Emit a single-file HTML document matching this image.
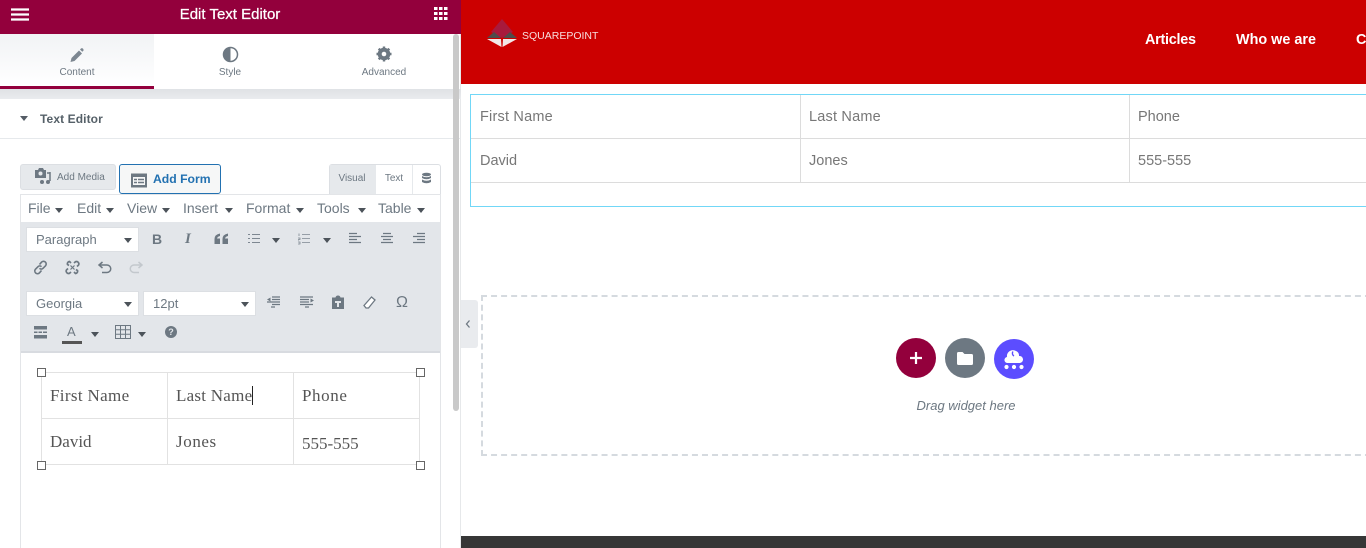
<!DOCTYPE html>
<html><head><meta charset="utf-8">
<style>
*{box-sizing:border-box}
html,body{margin:0;padding:0;width:1366px;height:548px;overflow:hidden;background:#fff;font-family:"Liberation Sans",sans-serif}
#w{position:absolute;left:0;top:0;width:1366px;height:548px;overflow:hidden}
.a{position:absolute;white-space:nowrap}
.c{transform:translateX(-50%)}
svg{position:absolute;display:block}
.m{font-size:14px;color:#6d7882}
.tri{position:absolute;width:0;height:0;border-left:4px solid transparent;border-right:4px solid transparent;border-top:5px solid #4c535a}
.sel{position:absolute;background:#fff;border:1px solid #dcdfe3;height:25px;font-size:13px;color:#6d7882;line-height:23px;padding-left:9px}
.ser{font-family:"Liberation Serif",serif;font-size:17px;color:#555}
.sp{letter-spacing:.35px}
.h{position:absolute;width:9px;height:9px;border:1px solid #666;background:#fff}
.rt{position:absolute;background:#e2e2e2}
.pg{font-size:14.5px;color:#777;line-height:17px}
</style></head><body><div id="w">

<!-- Right page -->
<div class="a" style="left:461px;top:0;width:905px;height:84px;background:#cc0000"></div>
<svg style="left:486px;top:18px" width="32" height="30" viewBox="0 0 32 30">
<polygon points="16,1 5,14 16,20 27,14" fill="#a81a3c"/>
<polygon points="8,14 1,20 15,20" fill="#504b4b"/>
<polygon points="24,14 31,20 17,20" fill="#504b4b"/>
<polygon points="1,21 15,21 15.500,29" fill="#f2e8e8"/>
<polygon points="31,21 17,21 16.500,29" fill="#f2e8e8"/>
</svg>
<div class="a" style="left:522px;top:29px;font-size:10.500px;color:#f7dede;line-height:14px">SQUAREPOINT</div>
<div class="a" style="left:1145px;top:31px;font-size:14.400px;letter-spacing:-.25px;font-weight:bold;color:#fff;line-height:18px">Articles</div>
<div class="a" style="left:1236px;top:31px;font-size:14.400px;font-weight:bold;color:#fff;line-height:18px">Who we are</div>
<div class="a" style="left:1356px;top:31px;font-size:14.400px;font-weight:bold;color:#fff;line-height:18px">Contact</div>

<div class="a" style="left:470px;top:94px;width:900px;height:113px;border:1px solid #71d7f7"></div>
<div class="a" style="left:471px;top:138px;width:895px;height:1px;background:#dcdcdc"></div>
<div class="a" style="left:471px;top:182px;width:895px;height:1px;background:#dcdcdc"></div>
<div class="a" style="left:800px;top:95px;width:1px;height:88px;background:#dcdcdc"></div>
<div class="a" style="left:1129px;top:95px;width:1px;height:88px;background:#dcdcdc"></div>
<div class="a pg" style="left:480px;top:109px;letter-spacing:.2px">First Name</div>
<div class="a pg" style="left:809px;top:109px;letter-spacing:.2px">Last Name</div>
<div class="a pg" style="left:1138px;top:109px">Phone</div>
<div class="a pg" style="left:480px;top:153px">David</div>
<div class="a pg" style="left:809px;top:153px">Jones</div>
<div class="a pg" style="left:1138px;top:153px">555-555</div>

<div class="a" style="left:481px;top:295px;width:900px;height:161px;border:2px dashed #d5dadf"></div>
<div class="a" style="left:896px;top:338px;width:40px;height:40px;border-radius:50%;background:#93003c"></div>
<svg style="left:896px;top:338px" width="40" height="40"><path d="M20 14v12M14 20h12" stroke="#fff" stroke-width="2.200"/></svg>
<div class="a" style="left:945px;top:338px;width:40px;height:40px;border-radius:50%;background:#6d7882"></div>
<svg style="left:945px;top:338px" width="40" height="40"><path d="M12 15.500q0-1.500 1.500-1.500h4l2 2h7q1.500 0 1.500 1.500v8q0 1.500-1.500 1.500h-13q-1.500 0-1.500-1.500z" fill="#fff"/></svg>
<div class="a" style="left:994px;top:339px;width:40px;height:40px;border-radius:50%;background:#5c4dff"></div>
<svg style="left:994px;top:339px" width="40" height="40"><path d="M14 24a3 3 0 0 1-1-6 6 6 0 0 1 9-6 5 5 0 0 1 3 5 3.500 3.500 0 0 1 1 7z" fill="#fff"/><path d="M19 12.500a3 3 0 0 0 1 4.500" fill="none" stroke="#5c4dff" stroke-width="1.400"/><circle cx="12.500" cy="28" r="2.100" fill="#fff"/><circle cx="20" cy="28" r="2.100" fill="#fff"/><circle cx="27.500" cy="28" r="2.100" fill="#fff"/></svg>
<div class="a c" style="left:966px;top:398px;font-size:13px;font-style:italic;color:#6d7882;line-height:15px">Drag widget here</div>

<div class="a" style="left:461px;top:536px;width:905px;height:12px;background:#363636"></div>

<!-- Collapse handle -->
<div class="a" style="left:461px;top:300px;width:17px;height:48px;background:#e9ebee;border-radius:0 3px 3px 0"></div>
<svg style="left:465px;top:320px" width="7" height="8"><path d="M4.500 .5 1.500 4 4.500 7.500" fill="none" stroke="#6d7882" stroke-width="1.300"/></svg>

<!-- Left panel -->
<div class="a" style="left:0;top:0;width:461px;height:548px;background:#fff;border-right:1px solid #e6e8ea"></div>
<div class="a" style="left:0;top:0;width:461px;height:34px;background:#93003c"></div>
<svg style="left:11px;top:8px" width="18" height="13"><path d="M0 1.500h18M0 6.500h18M0 11.500h18" stroke="#fff" stroke-width="2.300"/></svg>
<div class="a c" style="left:230px;top:6px;font-size:15px;color:#fff;line-height:18px;-webkit-text-stroke:.25px #fff">Edit Text Editor</div>
<svg style="left:434px;top:7px" width="14" height="13" fill="#fff"><rect width="3.500" height="3"/><rect x="5" width="3.500" height="3"/><rect x="10" width="3.500" height="3"/><rect y="5" width="3.500" height="3"/><rect x="5" y="5" width="3.500" height="3"/><rect x="10" y="5" width="3.500" height="3"/><rect y="10" width="3.500" height="3"/><rect x="5" y="10" width="3.500" height="3"/><rect x="10" y="10" width="3.500" height="3"/></svg>

<!-- Tabs -->
<div class="a" style="left:0;top:34px;width:154px;height:55px;background:linear-gradient(#f1f3f5,#fff);border-bottom:3px solid #93003c"></div>
<div class="a" style="left:0;top:89px;width:461px;height:10px;background:linear-gradient(#dfe2e5,#e9ebee)"></div>
<svg style="left:69px;top:47px" width="16" height="16"><path d="M1.500 15l1-4 7.500-7.500 3 3L5.500 14z" fill="#7d8791"/><path d="M11 2.500l1-1q1-.8 2 .2t.3 2l-1 1z" fill="#7d8791"/></svg>
<div class="a c" style="left:77px;top:67px;font-size:10px;color:#6d7882;line-height:12px">Content</div>
<svg style="left:222px;top:46px" width="17" height="17"><circle cx="8.500" cy="8.500" r="7" fill="#fff" stroke="#6d7882" stroke-width="1.500"/><path d="M8.500 1.500a7 7 0 0 0 0 14z" fill="#6d7882"/></svg>
<div class="a c" style="left:230px;top:67px;font-size:10px;color:#6d7882;line-height:12px">Style</div>
<svg style="left:376px;top:46px" width="16" height="16" viewBox="0 0 16 16"><circle cx="8" cy="8" r="4.700" fill="none" stroke="#6d7882" stroke-width="3.200"/><path d="M8 .5v15M.5 8h15M2.700 2.700l10.600 10.600M13.300 2.700 2.700 13.300" stroke="#6d7882" stroke-width="2.400"/><circle cx="8" cy="8" r="2.300" fill="#fff"/></svg>
<div class="a c" style="left:384px;top:67px;font-size:10px;color:#6d7882;line-height:12px">Advanced</div>

<!-- Section -->
<div class="a" style="left:0;top:138px;width:461px;height:1px;background:#e6e9ec"></div>
<div class="tri" style="left:20px;top:116px;border-top-color:#555d66"></div>
<div class="a" style="left:40px;top:112px;font-size:12px;font-weight:bold;color:#556068;line-height:15px;letter-spacing:.1px">Text Editor</div>

<!-- Scrollbar -->
<div class="a" style="left:453px;top:34px;width:6px;height:377px;background:#c9c9c9;border-radius:3px"></div>

<!-- Media buttons -->
<div class="a" style="left:20px;top:164px;width:96px;height:26px;background:#e6e9ec;border:1px solid #dcdfe3;border-radius:3px"></div>
<svg style="left:34px;top:167px" width="18" height="18"><path d="M1 3h3l1-2h4l1 2h2v8H1z" fill="#6d7882"/><circle cx="6.500" cy="6.500" r="2" fill="#e6e9ec"/><path d="M16 5v9" stroke="#6d7882" stroke-width="1.500"/><path d="M13 6h3" stroke="#6d7882" stroke-width="1.500"/><circle cx="14" cy="15" r="2" fill="#6d7882"/><circle cx="8" cy="15" r="2" fill="#6d7882"/></svg>
<div class="a" style="left:57px;top:172px;font-size:10px;color:#6d7882;line-height:12px">Add Media</div>
<div class="a" style="left:119px;top:164px;width:102px;height:30px;background:#f6f7f7;border:1px solid #2271b1;border-radius:3px"></div>
<svg style="left:131px;top:173px" width="17" height="15"><rect width="16" height="14" y=".5" fill="#6d7882"/><rect x="2" y="4" width="12" height="8" fill="#f6f7f7"/><path d="M3 6.500h3M7 6.500h6M3 9.500h3M7 9.500h6" stroke="#6d7882" stroke-width="1.500"/></svg>
<div class="a" style="left:153px;top:171px;font-size:12.200px;font-weight:bold;color:#2271b1;line-height:16px">Add Form</div>

<div class="a" style="left:329px;top:164px;width:112px;height:30px;border:1px solid #dcdfe3;border-bottom:0;border-radius:3px 3px 0 0;background:#fff"></div>
<div class="a" style="left:330px;top:165px;width:46px;height:29px;background:#e6e9ec"></div>
<div class="a" style="left:412px;top:165px;width:1px;height:29px;background:#e6e9ec"></div>
<div class="a c" style="left:352px;top:173px;font-size:10px;color:#6d7882;line-height:12px">Visual</div>
<div class="a c" style="left:394px;top:173px;font-size:10px;color:#6d7882;line-height:12px">Text</div>
<svg style="left:421px;top:172px" width="11" height="13" fill="#6d7882"><ellipse cx="5.500" cy="2.500" rx="4.500" ry="1.700"/><path d="M1 4q4.500 2.500 9 0v2q-4.500 2.500-9 0zM1 7.500q4.500 2.500 9 0v2.500q-4.500 2.500-9 0z"/></svg>

<!-- Editor frame -->
<div class="a" style="left:20px;top:194px;width:421px;height:354px;border:1px solid #e3e5e8;border-bottom:0;background:#fff"></div>
<div class="a m" style="left:28px;top:200px;line-height:16px">File</div><div class="tri" style="left:55px;top:208px"></div>
<div class="a m" style="left:77px;top:200px;line-height:16px">Edit</div><div class="tri" style="left:106px;top:208px"></div>
<div class="a m" style="left:127px;top:200px;line-height:16px">View</div><div class="tri" style="left:162px;top:208px"></div>
<div class="a m" style="left:183px;top:200px;line-height:16px">Insert</div><div class="tri" style="left:225px;top:208px"></div>
<div class="a m" style="left:246px;top:200px;line-height:16px">Format</div><div class="tri" style="left:296px;top:208px"></div>
<div class="a m" style="left:317px;top:200px;line-height:16px">Tools</div><div class="tri" style="left:358px;top:208px"></div>
<div class="a m" style="left:378px;top:200px;line-height:16px">Table</div><div class="tri" style="left:417px;top:208px"></div>

<div class="a" style="left:21px;top:222px;width:419px;height:131px;background:#e3e6ea;border-bottom:2px solid #d8dbe0"></div>

<div class="sel" style="left:26px;top:227px;width:113px">Paragraph</div><div class="tri" style="left:124px;top:238px"></div>
<div class="sel" style="left:26px;top:291px;width:113px">Georgia</div><div class="tri" style="left:124px;top:302px"></div>
<div class="sel" style="left:143px;top:291px;width:113px">12pt</div><div class="tri" style="left:241px;top:302px"></div>

<!-- Row 1 icons -->
<div class="a" style="left:152px;top:231px;font-size:14px;font-weight:bold;color:#6d7882;line-height:16px">B</div>
<div class="a" style="left:185px;top:231px;font-family:'Liberation Serif',serif;font-size:15px;font-weight:bold;font-style:italic;color:#6d7882;line-height:16px">I</div>
<svg style="left:214px;top:233px" width="15" height="12" fill="#6d7882"><path d="M6 .5v2.500Q3.500 3.500 3 5.500h3V11H.5V6Q.5 1.500 6 .5zM14 .5v2.500Q11.500 3.500 11 5.500h3V11H8.500V6Q8.500 1.500 14 .5z"/></svg>
<svg style="left:248px;top:233px" width="12" height="12"><path d="M4 1.500h8M4 5.500h8M4 9.500h8M0 1.500h2M0 5.500h2M0 9.500h2" stroke="#7d8791" stroke-width="1"/></svg>
<div class="tri" style="left:272px;top:238px"></div>
<svg style="left:298px;top:233px" width="13" height="12"><path d="M4 1.500h8M4 5.500h8M4 9.500h8M1 .5v2.500M0 5h2v1.500H0v1.500M0 9h2v2H0" stroke="#7d8791" stroke-width=".8" fill="none"/></svg>
<div class="tri" style="left:323px;top:238px"></div>
<svg style="left:349px;top:232px" width="12" height="13"><path d="M0 1.500h8M0 4.500h12M0 7.500h8M0 10.500h12" stroke="#6d7882" stroke-width="1.300"/></svg>
<svg style="left:381px;top:232px" width="12" height="13"><path d="M2 1.500h8M0 4.500h12M2 7.500h8M0 10.500h12" stroke="#6d7882" stroke-width="1.300"/></svg>
<svg style="left:413px;top:232px" width="12" height="13"><path d="M4 1.500h8M0 4.500h12M4 7.500h8M0 10.500h12" stroke="#6d7882" stroke-width="1.300"/></svg>

<!-- Row 2 icons -->
<svg style="left:33px;top:260px" width="15" height="15" fill="none" stroke="#6d7882" stroke-width="1.600"><path d="M6.500 4.500l2-2.300a2.500 2.500 0 0 1 4 3.600l-2.500 2.500a2.500 2.500 0 0 1-3.500 0"/><path d="M8.500 10.500l-2 2.300a2.500 2.500 0 0 1-4-3.600L5 6.700a2.500 2.500 0 0 1 3.500 0"/></svg>
<svg style="left:65px;top:260px" width="15" height="15" fill="none" stroke="#6d7882" stroke-width="1.700"><path d="M9 3l1.500-1.300a2.400 2.400 0 0 1 3 3.400L12 6.500M11 9.500l1.500 1a2.300 2.300 0 0 1-2 3L9 12"/><path d="M6 12l-1.500 1.300a2.400 2.400 0 0 1-3-3.400L3 8.500M4 5.500l-1.500-1a2.300 2.300 0 0 1 2-3L6 3"/><path d="M5.500 5.500l4 4M9.500 5.500l-4 4" stroke-width="1.200"/></svg>
<svg style="left:97px;top:261px" width="15" height="13" fill="none" stroke="#6d7882" stroke-width="1.500"><path d="M3 4h7a3.500 3.500 0 0 1 0 7.500H5"/><path d="M5.500 1 2 4l3.500 3"/></svg>
<svg style="left:129px;top:261px" width="15" height="13" fill="none" stroke="#c3c8cd" stroke-width="1.500"><path d="M12 4H5a3.500 3.500 0 0 0 0 7.500h5"/><path d="M9.500 1 13 4 9.500 7"/></svg>

<!-- Row 3 icons -->
<svg style="left:267px;top:296px" width="14" height="13"><path d="M5 1h8M5 3.500h8M0 6h13M5 8.500h8M4 11h4" stroke="#6d7882" stroke-width="1.200"/><path d="M0 3.500 3.500 1.500v4z" fill="#6d7882"/></svg>
<svg style="left:300px;top:296px" width="14" height="13"><path d="M0 1h13M0 3.500h9M0 6h9M0 8.500h13M5 11h4" stroke="#6d7882" stroke-width="1.200"/><path d="M14 4.500 10.500 2.500v4z" fill="#6d7882"/></svg>
<svg style="left:331px;top:295px" width="14" height="14"><path d="M1 2.500h3.500q.5-2 2.500-2t2.500 2H13V14H1z" fill="#6d7882"/><path d="M4 6h6v2H8v4H6V8H4z" fill="#e3e6ea"/></svg>
<svg style="left:363px;top:296px" width="13" height="13"><path d="M8.500 1 12 4 5.500 12H3L1 9.500z" fill="#fff" stroke="#6d7882" stroke-width="1.300"/></svg>
<div class="a" style="left:396px;top:294px;font-size:16px;color:#6d7882;line-height:18px">Ω</div>

<!-- Row 4 icons -->
<svg style="left:34px;top:326px" width="13" height="13" fill="#6d7882"><rect width="13" height="3.500"/><rect y="9" width="13" height="3.500"/><path d="M0 5.500h3.500v1.500H0zM4.500 5.500h3.500v1.500h-3.500zM9 5.500h4v1.500H9z"/></svg>
<div class="a" style="left:67px;top:325px;font-size:13px;color:#6d7882;line-height:14px">A</div>
<div class="a" style="left:62px;top:341px;width:20px;height:3px;background:#555"></div>
<div class="tri" style="left:91px;top:332px"></div>
<svg style="left:115px;top:325px" width="17" height="15" fill="none" stroke="#6d7882" stroke-width="1"><path d="M.5.500h15v13H.5zM.5 4.800h15M.5 9.200h15M5.500.5v13M10.500.5v13"/></svg>
<div class="tri" style="left:138px;top:332px"></div>
<div class="a" style="left:165px;top:326px;width:12px;height:12px;border-radius:50%;background:#6d7882;color:#e3e6ea;font-size:9px;font-weight:bold;line-height:12px;text-align:center">?</div>

<!-- Editor table -->
<div class="rt" style="left:41px;top:372px;width:379px;height:1px"></div>
<div class="rt" style="left:41px;top:418px;width:379px;height:1px"></div>
<div class="rt" style="left:41px;top:464px;width:379px;height:1px"></div>
<div class="rt" style="left:41px;top:372px;width:1px;height:93px"></div>
<div class="rt" style="left:167px;top:372px;width:1px;height:93px"></div>
<div class="rt" style="left:293px;top:372px;width:1px;height:93px"></div>
<div class="rt" style="left:419px;top:372px;width:1px;height:93px"></div>
<div class="h" style="left:37px;top:368px"></div>
<div class="h" style="left:416px;top:368px"></div>
<div class="h" style="left:37px;top:461px"></div>
<div class="h" style="left:416px;top:461px"></div>
<div class="a ser sp" style="left:50px;top:386px">First Name</div>
<div class="a ser" style="left:176px;top:386px;letter-spacing:.25px">Last Name</div>
<div class="a" style="left:252px;top:386px;width:1px;height:19px;background:#222"></div>
<div class="a ser sp" style="left:302px;top:386px;letter-spacing:.6px">Phone</div>
<div class="a ser" style="left:50px;top:432px">David</div>
<div class="a ser sp" style="left:176px;top:432px;letter-spacing:.6px">Jones</div>
<div class="a ser" style="left:302px;top:434px">555-555</div>

</div></body></html>
